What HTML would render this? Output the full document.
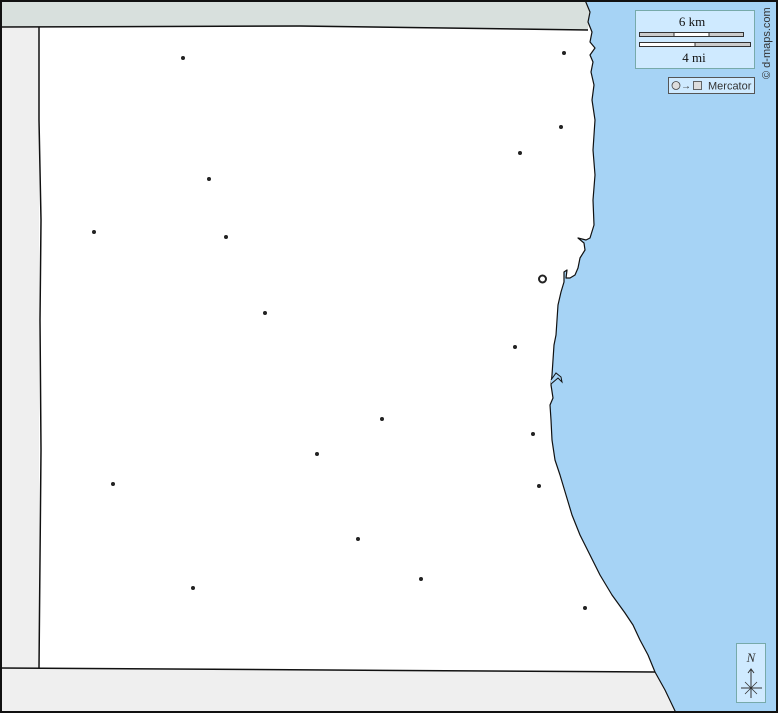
<!DOCTYPE html>
<html><head><meta charset="utf-8"><style>
html,body{margin:0;padding:0;background:#fff}
svg{display:block}
</style></head><body>
<svg width="778" height="713" viewBox="0 0 778 713" xmlns="http://www.w3.org/2000/svg" font-family="Liberation Serif, serif">
<rect x="0" y="0" width="778" height="713" fill="#ffffff"/>
<!-- top strip -->
<path d="M0 0 H590 L588 30 L300 27 L0 27 Z" fill="#d8e0dd"/>
<!-- left strip -->
<rect x="0" y="27" width="39" height="642" fill="#efefef"/>
<!-- bottom strip -->
<path d="M0 668 L655 672 L675 713 L0 713 Z" fill="#efefef"/>
<!-- sea -->
<path d="M585 0 L590 12 L588 22 L592 32 L590 42 L595 48 L590 55 L593 62 L591 72 L594 85 L592 100 L595 120 L593 150 L595 175 L593 200 L594 225 L590 238 L586 240 L578 238 L584 243 L585 250 L580 258 L578 268 L575 275 L570 278 L566 278 L567 270 L564 272 L564 282 L561 292 L558 305 L557 320 L556 335 L554 345 L553 360 L552 375 L551 385 L553 398 L550 405 L551 420 L552 440 L555 460 L560 475 L566 495 L572 515 L580 535 L590 555 L600 575 L612 595 L625 613 L633 625 L640 640 L648 655 L655 672 L665 690 L676 713 L778 713 L778 0 Z" fill="#a6d3f5" stroke="#111" stroke-width="1.2" stroke-linejoin="round"/>
<path d="M551 380 L556 373 L561 377 L562 382 L558 378 L551 384" fill="#a6d3f5" stroke="#111" stroke-width="1"/>
<!-- boundaries -->
<path d="M0 27 L300 26 L588 30" fill="none" stroke="#111" stroke-width="1.5"/>
<path d="M39 27 L39 120 L41 220 L40 320 L41 450 L39 668" fill="none" stroke="#111" stroke-width="1.5"/>
<path d="M0 668 L655 672" fill="none" stroke="#111" stroke-width="1.5"/>
<!-- towns -->
<g fill="#222">
<circle cx="183" cy="58" r="2"/><circle cx="564" cy="53" r="2"/><circle cx="561" cy="127" r="2"/>
<circle cx="520" cy="153" r="2"/><circle cx="209" cy="179" r="2"/><circle cx="94" cy="232" r="2"/>
<circle cx="226" cy="237" r="2"/><circle cx="265" cy="313" r="2"/><circle cx="515" cy="347" r="2"/>
<circle cx="382" cy="419" r="2"/><circle cx="533" cy="434" r="2"/><circle cx="317" cy="454" r="2"/>
<circle cx="113" cy="484" r="2"/><circle cx="539" cy="486" r="2"/><circle cx="358" cy="539" r="2"/>
<circle cx="421" cy="579" r="2"/><circle cx="193" cy="588" r="2"/><circle cx="585" cy="608" r="2"/>
</g>
<circle cx="542.5" cy="279" r="3.5" fill="none" stroke="#222" stroke-width="2"/>
<!-- scale box -->
<rect x="635.5" y="10.5" width="119" height="58" fill="#cfeaff" stroke="#7aa" stroke-width="1"/>
<text x="692" y="26" font-size="13" text-anchor="middle" fill="#111">6 km</text>
<rect x="639.5" y="32.5" width="104" height="4" fill="#ccc" stroke="#333" stroke-width="1"/>
<rect x="674" y="33" width="35" height="3" fill="#fff"/>
<line x1="674" y1="32" x2="674" y2="37" stroke="#333"/><line x1="709" y1="32" x2="709" y2="37" stroke="#333"/>
<rect x="639.5" y="42.5" width="111" height="4" fill="#ccc" stroke="#333" stroke-width="1"/>
<rect x="640" y="43" width="55" height="3" fill="#fff"/>
<line x1="695" y1="42" x2="695" y2="47" stroke="#333"/>
<text x="694" y="62" font-size="13" text-anchor="middle" fill="#111">4 mi</text>
<!-- projection -->
<rect x="668.5" y="77.5" width="86" height="16" fill="#cfeaff" stroke="#555" stroke-width="1"/>
<circle cx="676" cy="85.5" r="4" fill="#ddd" stroke="#444" stroke-width="0.8"/>
<text x="686" y="89" font-size="10" font-family="Liberation Sans, sans-serif" text-anchor="middle" fill="#333">→</text>
<rect x="693.5" y="81.5" width="8" height="8" fill="#ddd" stroke="#444" stroke-width="0.8"/>
<text x="708" y="89.5" font-size="11" font-family="Liberation Sans, sans-serif" fill="#333">Mercator</text>
<!-- copyright -->
<text transform="translate(770,79) rotate(-90)" font-size="11" font-family="Liberation Sans, sans-serif" fill="#333">© d-maps.com</text>
<!-- north -->
<rect x="736.5" y="643.5" width="29" height="59" fill="#cfeaff" stroke="#7aa" stroke-width="1"/>
<text x="751" y="662" font-size="13" font-style="italic" text-anchor="middle" fill="#333">N</text>
<line x1="751" y1="670" x2="751" y2="698" stroke="#333" stroke-width="1"/>
<path d="M748 673 L751 669 L754 673" fill="none" stroke="#333" stroke-width="1"/>
<line x1="741" y1="688" x2="762" y2="688" stroke="#333" stroke-width="1"/>
<line x1="745" y1="682" x2="757" y2="694" stroke="#333" stroke-width="0.8"/>
<line x1="757" y1="682" x2="745" y2="694" stroke="#333" stroke-width="0.8"/>
<!-- frame -->
<rect x="1" y="1" width="776" height="711" fill="none" stroke="#111" stroke-width="2"/>
</svg>
</body></html>
